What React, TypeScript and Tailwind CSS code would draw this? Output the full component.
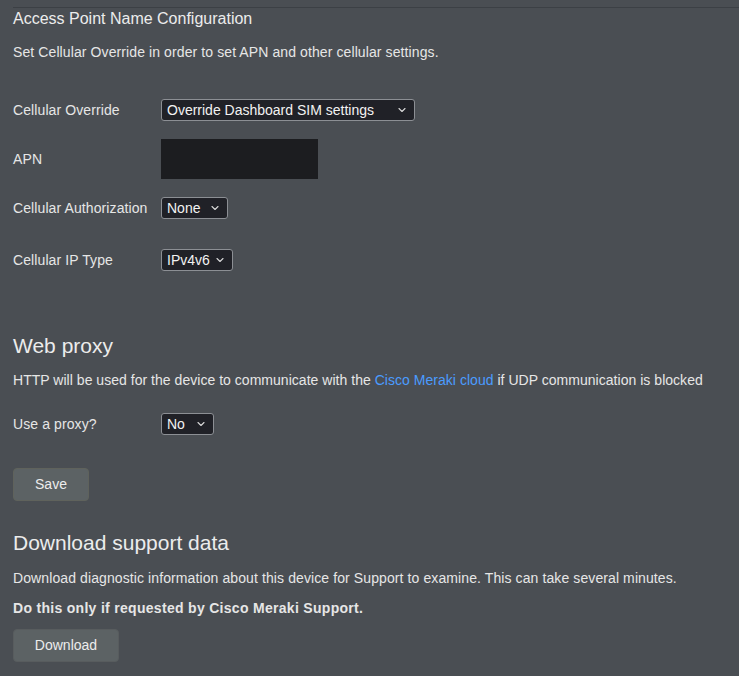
import { ChevronDown } from 'lucide-react'

function Select({ value, width }: { value: string; width: string }) {
  return (
    <div
      className={`flex h-[22px] ${width} items-center justify-between rounded-[3px] border border-[#8c8f94] bg-[#202127] pl-[5px] pr-[6px] text-[14px] text-[#f2f2f2]`}
    >
      <span>{value}</span>
      <ChevronDown size={12} strokeWidth={2.2} className="text-[#d8d8d8]" />
    </div>
  )
}

function Row({ label, children, className = '' }: { label: string; children: React.ReactNode; className?: string }) {
  return (
    <div className={`flex items-center ${className}`}>
      <div className="w-[148px] shrink-0 text-[14px] tracking-[0.1px] text-[#e6e6e6]">{label}</div>
      {children}
    </div>
  )
}

export default function App() {
  return (
    <div
      className="min-h-[676px] w-full bg-[#4a4e53] pt-[7px] text-[#e6e6e6]"
      style={{ fontFamily: '"Liberation Sans", Arial, sans-serif' }}
    >
      <div className="ml-[13px] border-t border-[#3c4045] pt-[1px]">
        <h1 className="text-[16px] leading-[20px] text-[#ececec]">Access Point Name Configuration</h1>
        <p className="mt-[15px] text-[14px] leading-[16px] tracking-[0.1px]">
          Set Cellular Override in order to set APN and other cellular settings.
        </p>

        <Row label="Cellular Override" className="mt-[39px]">
          <Select value="Override Dashboard SIM settings" width="w-[254px]" />
        </Row>

        <Row label="APN" className="mt-[18px]">
          <div className="h-[40px] w-[157px] bg-[#1c1d20]" />
        </Row>

        <Row label="Cellular Authorization" className="mt-[18px]">
          <Select value="None" width="w-[67px]" />
        </Row>

        <Row label="Cellular IP Type" className="mt-[30px]">
          <Select value="IPv4v6" width="w-[72px]" />
        </Row>

        <h2 className="mt-[63px] text-[21px] leading-[24px] text-[#ececec]">Web proxy</h2>
        <p className="mt-[14px] text-[14px] leading-[16px] tracking-[0.03px]">
          HTTP will be used for the device to communicate with the{' '}
          <span className="text-[#4a9cff]">Cisco Meraki cloud</span> if UDP communication is blocked
        </p>

        <Row label="Use a proxy?" className="mt-[25px]">
          <Select value="No" width="w-[53px]" />
        </Row>

        <button className="mt-[33px] h-[33px] w-[76px] rounded-[4px] border border-[#5f625c] bg-[#5c6264] text-[14px] text-[#ececec]">
          Save
        </button>

        <h2 className="mt-[30px] text-[21px] leading-[24px] text-[#ececec]">Download support data</h2>
        <p className="mt-[15px] text-[14px] leading-[16px] tracking-[0.1px]">
          Download diagnostic information about this device for Support to examine. This can take several minutes.
        </p>
        <p className="mt-[14px] text-[14px] font-bold leading-[16px] tracking-[0.3px]">
          Do this only if requested by Cisco Meraki Support.
        </p>

        <button className="mt-[13px] h-[33px] w-[106px] rounded-[4px] border border-[#585c5e] bg-[#5c6264] text-[14px] text-[#ececec]">
          Download
        </button>
      </div>
    </div>
  )
}
